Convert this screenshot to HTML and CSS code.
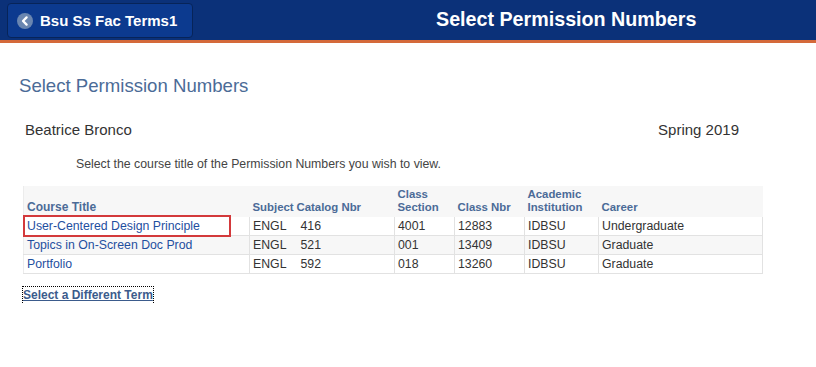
FILE: index.html
```html
<!DOCTYPE html>
<html lang="en">
<head>
    <meta charset="UTF-8">
    <title>Select Permission Numbers</title>
    <link rel="stylesheet" href="styles.css">
</head>
<body>
    <div class="banner">
        <a class="back-btn" href="#">
            <svg class="back-icon" width="16" height="16" viewBox="0 0 16 16">
                <circle cx="8" cy="8" r="8" fill="#6a86b0"/>
                <path d="M9.6 4.4 L6 8 L9.6 11.6" fill="none" stroke="#fff" stroke-width="2.3" stroke-linecap="round" stroke-linejoin="round"/>
            </svg>
            <span>Bsu Ss Fac Terms1</span>
        </a>
        <div class="banner-title">Select Permission Numbers</div>
    </div>

    <div class="page">
        <h1>Select Permission Numbers</h1>

        <div class="student-row">
            <span>Beatrice Bronco</span>
            <span>Spring 2019</span>
        </div>

        <p class="instructions">Select the course title of the Permission Numbers you wish to view.</p>

        <table class="perm-table">
            <thead>
                <tr>
                    <th class="col-title">Course Title</th>
                    <th class="col-subject">Subject</th>
                    <th class="col-catalog">Catalog Nbr</th>
                    <th class="col-section">Class<br>Section</th>
                    <th class="col-nbr">Class Nbr</th>
                    <th class="col-inst">Academic<br>Institution</th>
                    <th class="col-career">Career</th>
                </tr>
            </thead>
            <tbody>
                <tr>
                    <td class="marked"><a href="#">User-Centered Design Principle</a></td>
                    <td class="sep">ENGL</td>
                    <td class="catalog">416</td>
                    <td class="sep">4001</td>
                    <td class="sep">12883</td>
                    <td class="sep">IDBSU</td>
                    <td class="sep">Undergraduate</td>
                </tr>
                <tr>
                    <td><a href="#">Topics in On-Screen Doc Prod</a></td>
                    <td class="sep">ENGL</td>
                    <td class="catalog">521</td>
                    <td class="sep">001</td>
                    <td class="sep">13409</td>
                    <td class="sep">IDBSU</td>
                    <td class="sep">Graduate</td>
                </tr>
                <tr>
                    <td><a href="#">Portfolio</a></td>
                    <td class="sep">ENGL</td>
                    <td class="catalog">592</td>
                    <td class="sep">018</td>
                    <td class="sep">13260</td>
                    <td class="sep">IDBSU</td>
                    <td class="sep">Graduate</td>
                </tr>
            </tbody>
        </table>

        <a class="term-link" href="#">Select a Different Term</a>
    </div>
</body>
</html>
```

FILE: styles.css
```css
body {
    margin: 0;
    font-family: "Liberation Sans", Arial, sans-serif;
    color: #333;
    background-color: #fff;
}

.banner {
    display: flex;
    align-items: flex-start;
    height: 40px;
    padding-left: 7px;
    background-color: #0b3179;
    border-bottom: 3px solid #d4693a;
}

.back-btn {
    display: flex;
    align-items: center;
    box-sizing: border-box;
    width: 186px;
    height: 35px;
    margin-top: 3px;
    padding-left: 9px;
    border: 1px solid #072459;
    border-radius: 4px;
    background-color: #0c3a8f;
    color: #fff;
    font-size: 15px;
    font-weight: bold;
    text-decoration: none;
}

.back-icon {
    margin-right: 7px;
}

.banner-title {
    margin-left: 243px;
    margin-top: 8px;
    color: #fff;
    font-size: 19.7px;
    font-weight: bold;
}

.page {
    padding-left: 19px;
}

h1 {
    margin: 32px 0 0;
    font-size: 18.6px;
    font-weight: normal;
    color: #4b6b97;
}

.student-row {
    display: flex;
    justify-content: space-between;
    width: 714px;
    margin-top: 24px;
    padding-left: 6px;
    font-size: 15px;
    color: #333;
}

.instructions {
    margin: 19px 0 0 57px;
    font-size: 12.3px;
    color: #444;
}

.perm-table {
    width: 739px;
    margin: 15px 0 0 4px;
    border-collapse: collapse;
    table-layout: fixed;
    font-size: 12.3px;
}

.perm-table th,
.perm-table td {
    box-sizing: border-box;
}

.perm-table th {
    height: 30px;
    padding: 2px 3px 3px;
    background-color: #f7f7f7;
    color: #4b6b97;
    font-weight: bold;
    font-size: 11.4px;
    text-align: left;
    vertical-align: bottom;
    line-height: 13px;
    white-space: nowrap;
}

.perm-table th.col-title {
    border-left: 1px solid #ececec;
    font-size: 12px;
}

.perm-table th.col-catalog {
    padding-left: 4px;
}

.col-title { width: 226px; }
.col-subject { width: 43px; }
.col-catalog { width: 102px; }
.col-section { width: 60px; }
.col-nbr { width: 70px; }
.col-inst { width: 74px; }
.col-career { width: 164px; }

.perm-table td {
    padding: 2px 3px 2px;
    border-bottom: 1px solid #e2e2e2;
    line-height: 14px;
    color: #333;
}

.perm-table td:first-child {
    border-left: 1px solid #ececec;
}

.perm-table td:last-child {
    border-right: 1px solid #e2e2e2;
}

.perm-table td.sep {
    border-left: 1px solid #e2e2e2;
}

.perm-table td.catalog {
    padding-left: 8px;
}

.perm-table tbody tr:nth-child(2) td {
    background-color: #f7f7f7;
}

.perm-table a {
    color: #1f4f9f;
    text-decoration: none;
}

.marked {
    position: relative;
}

.marked::after {
    content: "";
    position: absolute;
    left: -1px;
    top: -2px;
    box-sizing: border-box;
    width: 208px;
    height: 22px;
    border: 2px solid #d3393b;
}

.term-link {
    display: inline-block;
    margin: 13px 0 0 4px;
    padding: 1px 0 2px;
    outline: 1px dotted #000;
    color: #3b5b8c;
    font-size: 12px;
    font-weight: bold;
}
```
